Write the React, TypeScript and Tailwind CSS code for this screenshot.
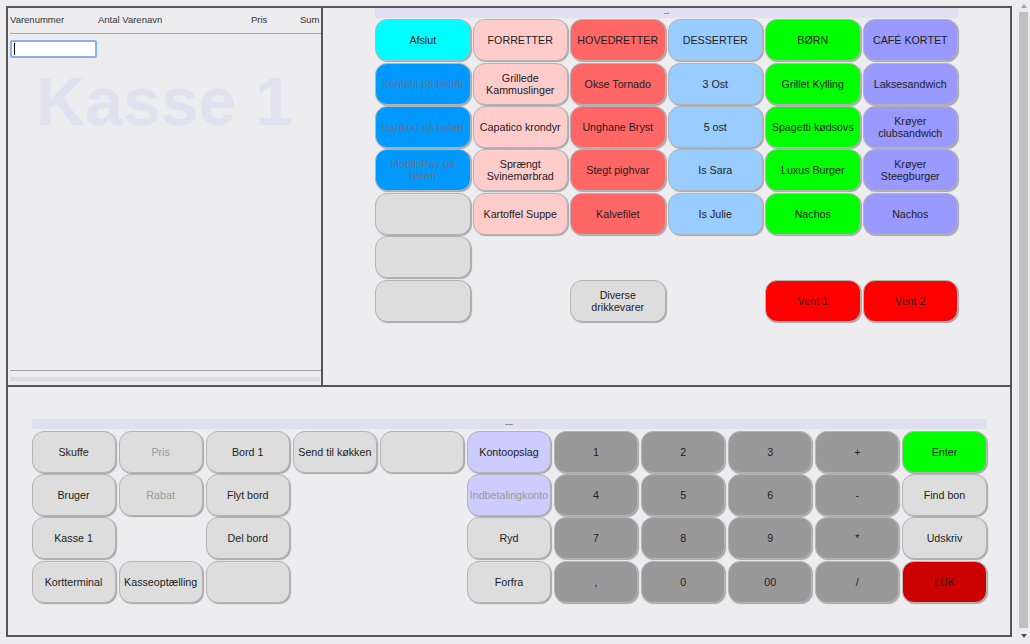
import React from "react";

type B = { t: string; c: string; m?: boolean } | null;

const cyan = "bg-[#00ffff]";
const blue = "bg-[#0099ff]";
const pink = "bg-[#ffcccc]";
const red = "bg-[#ff6666]";
const lblue = "bg-[#99ccff]";
const green = "bg-[#00ff00]";
const purple = "bg-[#9999ff]";
const gray = "bg-[#dddddd]";
const vent = "bg-[#ff0000]";
const lav = "bg-[#ccccff]";
const num = "bg-[#999999]";
const luk = "bg-[#cc0000]";

const top: B[][] = [
  [
    { t: "Afslut", c: cyan },
    { t: "FORRETTER", c: pink },
    { t: "HOVEDRETTER", c: red },
    { t: "DESSERTER", c: lblue },
    { t: "BØRN", c: green },
    { t: "CAFÉ KORTET", c: purple },
  ],
  [
    { t: "Kontant på beløb", c: blue, m: true },
    { t: "Grillede Kammuslinger", c: pink },
    { t: "Okse Tornado", c: red },
    { t: "3 Ost", c: lblue },
    { t: "Grillet Kylling", c: green },
    { t: "Laksesandwich", c: purple },
  ],
  [
    { t: "Dankort på beløb", c: blue, m: true },
    { t: "Capatico krondyr", c: pink },
    { t: "Unghane Bryst", c: red },
    { t: "5 ost", c: lblue },
    { t: "Spagetti kødsovs", c: green },
    { t: "Krøyer clubsandwich", c: purple },
  ],
  [
    { t: "MobilePay på beløb", c: blue, m: true },
    { t: "Sprængt Svinemørbrad", c: pink },
    { t: "Stegt pighvar", c: red },
    { t: "Is Sara", c: lblue },
    { t: "Luxus Burger", c: green },
    { t: "Krøyer Steegburger", c: purple },
  ],
  [
    { t: "", c: gray },
    { t: "Kartoffel Suppe", c: pink },
    { t: "Kalvefilet", c: red },
    { t: "Is Julie", c: lblue },
    { t: "Nachos", c: green },
    { t: "Nachos", c: purple },
  ],
  [{ t: "", c: gray }, null, null, null, null, null],
  [
    { t: "", c: gray },
    null,
    { t: "Diverse drikkevarer", c: gray },
    null,
    { t: "Vent 1", c: vent },
    { t: "Vent 2", c: vent },
  ],
];

const bottom: B[][] = [
  [
    { t: "Skuffe", c: gray },
    { t: "Pris", c: gray, m: true },
    { t: "Bord 1", c: gray },
    { t: "Send til køkken", c: gray },
    { t: "", c: gray },
    { t: "Kontoopslag", c: lav },
    { t: "1", c: num },
    { t: "2", c: num },
    { t: "3", c: num },
    { t: "+", c: num },
    { t: "Enter", c: green },
  ],
  [
    { t: "Bruger", c: gray },
    { t: "Rabat", c: gray, m: true },
    { t: "Flyt bord", c: gray },
    null,
    null,
    { t: "Indbetalingkonto", c: lav, m: true },
    { t: "4", c: num },
    { t: "5", c: num },
    { t: "6", c: num },
    { t: "-", c: num },
    { t: "Find bon", c: gray },
  ],
  [
    { t: "Kasse 1", c: gray },
    null,
    { t: "Del bord", c: gray },
    null,
    null,
    { t: "Ryd", c: gray },
    { t: "7", c: num },
    { t: "8", c: num },
    { t: "9", c: num },
    { t: "*", c: num },
    { t: "Udskriv", c: gray },
  ],
  [
    { t: "Kortterminal", c: gray },
    { t: "Kasseoptælling", c: gray },
    { t: "", c: gray },
    null,
    null,
    { t: "Forfra", c: gray },
    { t: ",", c: num },
    { t: "0", c: num },
    { t: "00", c: num },
    { t: "/", c: num },
    { t: "LUK", c: luk },
  ],
];

function Btn({ b }: { b: B }) {
  if (!b) return <div />;
  const muted = b.m ? (b.c === blue ? "text-[#5f7890]" : "text-[#9a9a9a]") : "text-[#222]";
  return (
    <button
      className={`h-[42px] w-full rounded-[12px] border border-[#b4b4b4] shadow-[1px_1px_1px_rgba(0,0,0,0.3)] text-[10.7px] leading-[12px] flex items-center justify-center text-center px-[2px] overflow-visible ${b.c} ${muted}`}
    >
      {b.t}
    </button>
  );
}

export default function App() {
  return (
    <div className="w-[1030px] h-[644px] bg-[#ededf0] flex items-start font-['Liberation_Sans',Arial,sans-serif] text-[#222] overflow-hidden">
      <div className="pl-[6px] pt-[6px]">
        <div className="w-[1006px] h-[631px] border-2 border-[#555] flex flex-col">
          {/* top section */}
          <div className="h-[379px] border-b-2 border-[#555] flex">
            {/* left panel */}
            <div className="w-[315px] border-r-2 border-[#555] relative flex flex-col pl-[2px]">
              <div className="absolute left-0 right-0 top-[59px] text-center text-[68px] leading-[68px] font-bold text-[#e1e1ef] select-none">
                Kasse 1
              </div>
              <div className="h-[26px] border-b border-[#a8a8a8] flex items-center text-[9.5px] text-[#333] relative">
                <span className="w-[88px]">Varenummer</span>
                <span className="w-[153px]">Antal Varenavn</span>
                <span className="w-[49px]">Pris</span>
                <span>Sum</span>
              </div>
              <div className="mt-[6px] w-[87px] h-[18px] bg-white border-2 border-[#8ab0ee] rounded-[2px] flex items-center pl-[2px] relative">
                <span className="w-px h-[12px] bg-black" />
              </div>
              <div className="mt-auto h-px bg-[#a0a0a0] mr-0" />
              <div className="mt-[6px] h-[4px] bg-[#dedede] mb-[4px] mr-[1px]" />
            </div>
            {/* right panel */}
            <div className="flex-1 flex flex-col items-center">
              <div className="w-[583px] h-[10px] bg-[#e0e0f0] text-[8px] leading-[10px] text-center text-[#333]">
                --
              </div>
              <div className="w-[583px] mt-[1.3px] grid grid-cols-6 gap-x-[2px] gap-y-[1.4px]">
                {top.flat().map((b, i) => (
                  <Btn key={i} b={b} />
                ))}
              </div>
            </div>
          </div>
          {/* bottom section */}
          <div className="flex-1 flex flex-col items-center pt-[32px]">
            <div className="w-[955px] h-[10px] bg-[#e0e0f0] text-[8px] leading-[10px] text-center text-[#333]">
              ---
            </div>
            <div className="w-[955px] mt-[1.5px] grid grid-cols-11 gap-x-[3px] gap-y-[1.4px]">
              {bottom.flat().map((b, i) => (
                <Btn key={i} b={b} />
              ))}
            </div>
          </div>
        </div>
      </div>
      {/* scrollbar */}
      <div className="ml-[7px] w-[9px] h-[644px] flex flex-col items-center">
        <div className="h-[12px] flex items-center justify-center">
          <div className="w-0 h-0 border-l-[3px] border-r-[3px] border-b-[4px] border-l-transparent border-r-transparent border-b-[#a3a3a3]" />
        </div>
        <div className="w-[9px] flex-1 bg-[#c1c1c1]" />
        <div className="h-[16px] flex items-start justify-center pt-[6px]">
          <div className="w-0 h-0 border-l-[3px] border-r-[3px] border-t-[4px] border-l-transparent border-r-transparent border-t-[#505050]" />
        </div>
      </div>
    </div>
  );
}
